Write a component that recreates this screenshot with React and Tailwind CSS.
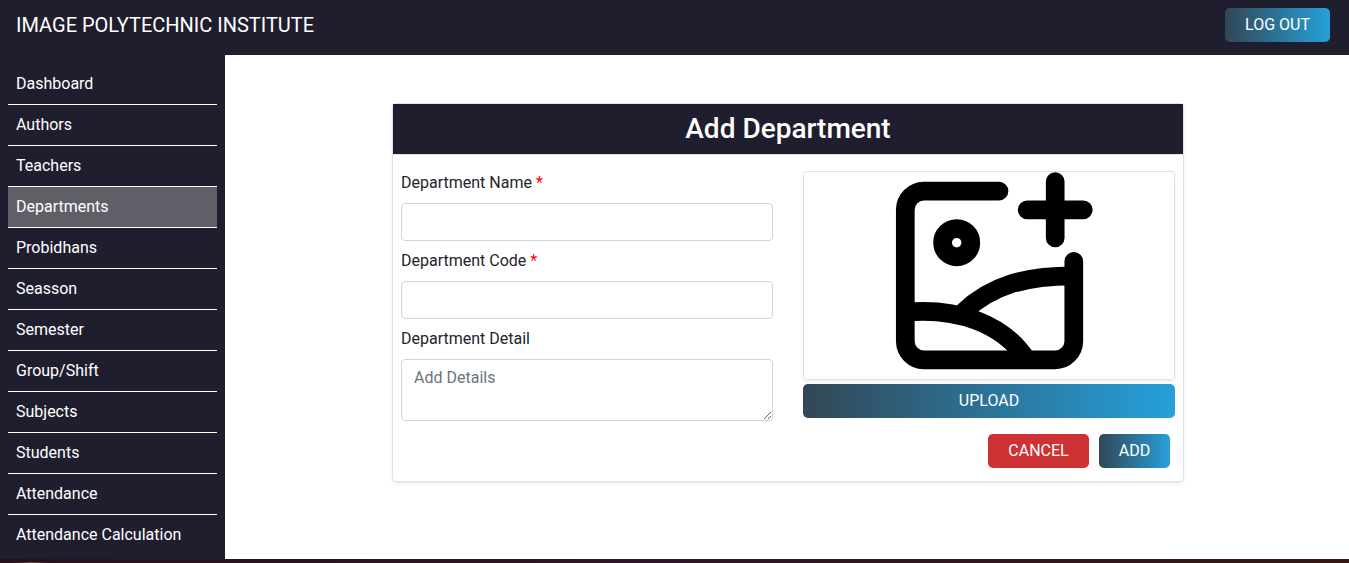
const links = [
  'Dashboard', 'Authors', 'Teachers', 'Departments', 'Probidhans', 'Seasson',
  'Semester', 'Group/Shift', 'Subjects', 'Students', 'Attendance', 'Attendance Calculation',
];

function GradientButton({ className, children }) {
  return (
    <button className={`h-[34px] rounded-[5px] bg-linear-to-r/srgb from-[#314755] to-[#26a0da] text-white ${className}`}>
      {children}
    </button>
  );
}

function Sidebar() {
  return (
    <nav className="w-[225px] shrink-0 bg-[#1f1e2e] px-2 pt-[9px]">
      {links.map((name, i) => (
        <a
          key={name}
          className={`flex h-[41px] items-center border-b px-2 pb-px text-white ${
            i === links.length - 1 ? 'border-transparent' : 'border-white'
          } ${name === 'Departments' ? 'bg-[#5f5f68]' : ''}`}
        >
          {name}
        </a>
      ))}
    </nav>
  );
}

function AddImageIcon() {
  return (
    <svg viewBox="804 172 370 207" className="h-[207px] w-[370px]" fill="none" stroke="#000" strokeWidth="18.7" strokeLinecap="round">
      <path d="M999 191.1H923.8A18.7 18.7 0 0 0 905.3 209.8V341.2A18.7 18.7 0 0 0 923.8 359.8H1055A18.7 18.7 0 0 0 1073.8 341.2V261.4" />
      <path d="M1055.2 181.5V238M1027.1 209.8H1083.3" />
      <circle cx="956.7" cy="242.7" r="14.1" />
      <path strokeLinecap="butt" d="M963.5 312C991 285.5 1026 275.8 1073 275.8" />
      <path strokeLinecap="butt" d="M905.3 312.1C957 307.5 1003 323 1027 360" />
    </svg>
  );
}

function Field({ label, required, children }) {
  return (
    <div className="mb-2">
      <label className="mb-2 block">
        {label} {required && <span className="text-[#ff0000]">*</span>}
      </label>
      {children}
    </div>
  );
}

const inputClass = 'block w-full rounded-[4px] border border-[#ced4da] bg-white px-3 py-1.5 outline-none placeholder:text-[#6c757d]';

export default function App() {
  return (
    <div className="flex h-[563px] flex-col overflow-hidden bg-white font-['Roboto',sans-serif] text-base text-[#212529]">
      <header className="flex h-[55px] shrink-0 items-start justify-between bg-[#1f1e2e] pl-4 pr-[19px] pt-2">
        <h1 className="pt-0.5 text-xl leading-[30px] text-white">IMAGE POLYTECHNIC INSTITUTE</h1>
        <GradientButton className="w-[105px]">LOG OUT</GradientButton>
      </header>
      <div className="flex h-[504px] shrink-0">
        <Sidebar />
        <main className="flex grow justify-center pt-12">
          <section className="mr-[-2px] h-[379px] w-[792px] rounded-[4px] border border-[#dee2e6] bg-white shadow-[0_2px_4px_rgba(0,0,0,0.075)]">
            <h2 className="h-[51px] border-b border-[#dee2e6] bg-[#1f1e2e] bg-clip-padding pt-2 text-center text-[28px] font-medium leading-[33.6px] text-white">
              Add Department
            </h2>
            <div className="grid grid-cols-2 gap-[30px] px-2 pt-4">
              <div>
                <Field label="Department Name" required>
                  <input className={`${inputClass} h-[38px]`} />
                </Field>
                <Field label="Department Code" required>
                  <input className={`${inputClass} h-[38px]`} />
                </Field>
                <Field label="Department Detail">
                  <textarea placeholder="Add Details" className={`${inputClass} h-[62px]`} />
                </Field>
              </div>
              <div>
                <div className="h-[209px] rounded-[4px] border border-[#dee2e6] shadow-[0_2px_4px_rgba(0,0,0,0.075)]">
                  <AddImageIcon />
                </div>
                <GradientButton className="mt-1 block w-full">UPLOAD</GradientButton>
                <div className="mt-4 flex justify-end gap-2.5 pr-[5px]">
                  <button className="h-[34px] w-[101px] rounded-[5px] bg-[#cf3234] text-white">CANCEL</button>
                  <GradientButton className="w-[71px]">ADD</GradientButton>
                </div>
              </div>
            </div>
          </section>
        </main>
      </div>
      <div className="flex h-1 shrink-0 flex-col justify-end bg-linear-to-r/srgb from-[#26121c] via-[#301626] to-[#351614]">
        <div className="ml-3.5 h-px w-[34px] bg-linear-to-r/srgb from-[#6b505300] via-[#6b5053] to-[#6b505300]" />
      </div>
    </div>
  );
}
